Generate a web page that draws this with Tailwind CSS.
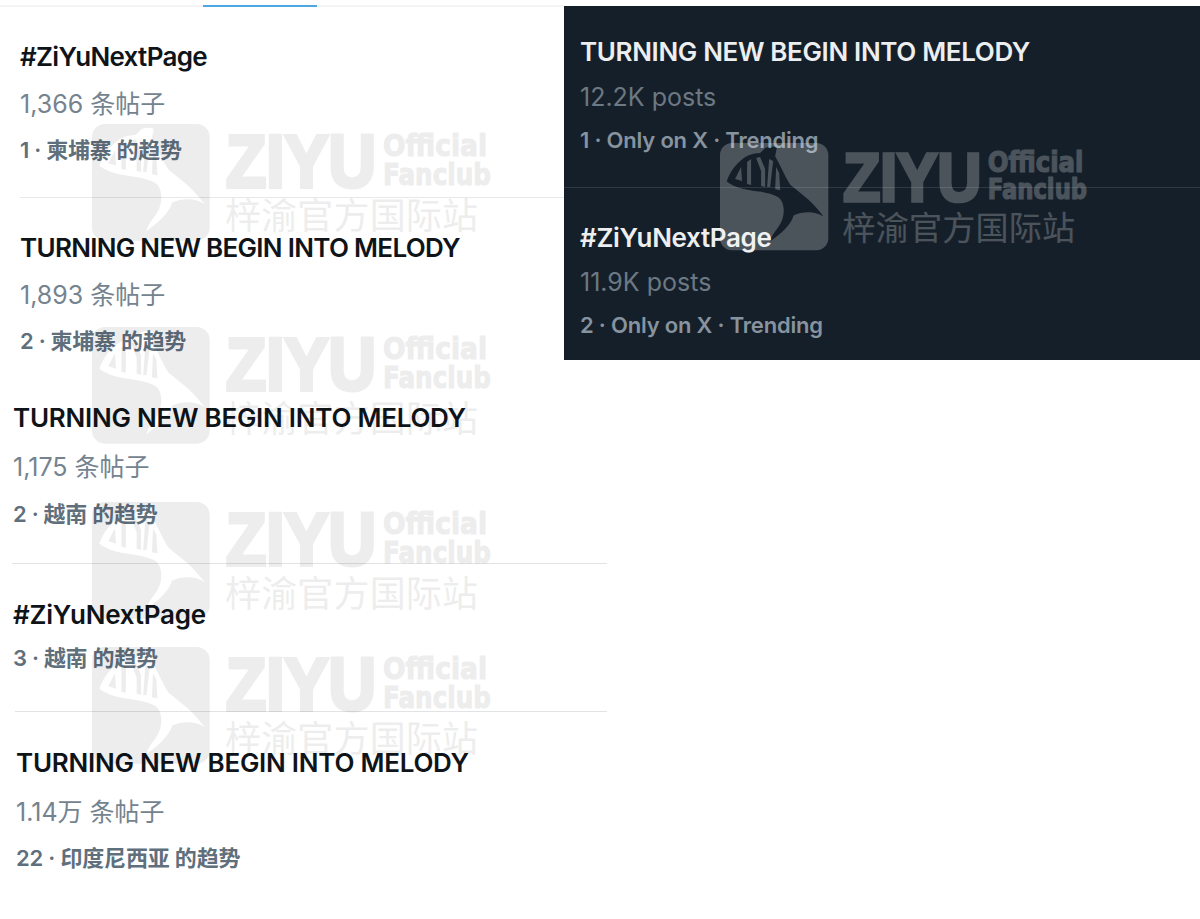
<!DOCTYPE html>
<html lang="zh-CN">
<head>
  <meta charset="UTF-8">
  <title>ZiYu trending</title>
  <script src="https://cdn.jsdelivr.net/npm/@tailwindcss/browser@4"></script>
</head>
<body class="bg-white">
  <div id="page" class="relative w-[1200px] h-[919px] overflow-hidden bg-white font-['Inter','Noto_Sans_CJK_SC',sans-serif]">

    <!-- Top row -->
    <div class="flex h-[366px]">
      <section class="w-[564px] shrink-0 pl-5">
        <div class="h-[5px]"></div>
        <div class="h-[2px] -ml-5 bg-[#f3f4f4]">
          <div class="ml-[203px] w-[114px] h-[2px] bg-[#4fa8e2]"></div>
        </div>
        <div class="h-[26px]"></div>
        <h2 class="h-[48px] leading-[48px] text-[26px] font-semibold tracking-[-0.7px] text-[#0f1419]">#ZiYuNextPage</h2>
        <p class="h-[46px] leading-[46px] text-[25px] text-[#75838f]">1,366 条帖子</p>
        <p class="h-[46px] leading-[46px] text-[22px] font-semibold tracking-[-0.3px] text-[#5f6f7c]">1 · 柬埔寨 的趋势</p>
        <div class="h-[24px]"></div>
        <div class="h-px bg-[#e6e9eb]"></div>
        <div class="h-[26px]"></div>
        <h2 class="h-[48px] leading-[48px] text-[26px] font-semibold tracking-[-0.7px] text-[#0f1419]">TURNING NEW BEGIN INTO MELODY</h2>
        <p class="h-[46px] leading-[47px] text-[25px] text-[#75838f]">1,893 条帖子</p>
        <p class="h-[46px] leading-[46px] text-[22px] font-semibold tracking-[-0.3px] text-[#5f6f7c]">2 · 柬埔寨 的趋势</p>
      </section>

      <section class="w-[636px] h-[354px] mt-[6px] pl-4 bg-[#151f2a]">
        <div class="h-[22px]"></div>
        <h2 class="h-[48px] leading-[48px] text-[26px] font-semibold tracking-[-0.35px] text-[#eceeef]">TURNING NEW BEGIN INTO MELODY</h2>
        <p class="h-[42px] leading-[42px] text-[25px] text-[#6c7882]">12.2K posts</p>
        <p class="h-[44px] leading-[44px] text-[22px] font-semibold tracking-[-0.2px] text-[#87939e]">1 · Only on X · Trending</p>
        <div class="h-[25px]"></div>
        <div class="h-px -ml-4 bg-[#2f3943]"></div>
        <div class="h-[26px]"></div>
        <h2 class="h-[47px] leading-[48px] text-[26px] font-semibold tracking-[-0.35px] text-[#eceeef]">#ZiYuNextPage</h2>
        <p class="h-[42px] leading-[42px] text-[25px] text-[#6c7882]">11.9K posts</p>
        <p class="h-[44px] leading-[44px] text-[22px] font-semibold tracking-[-0.2px] text-[#87939e]">2 · Only on X · Trending</p>
      </section>
    </div>

    <!-- Lower list -->
    <section class="w-[607px]">
      <div class="h-[28px]"></div>
      <div class="pl-[13px]">
        <h2 class="h-[49px] leading-[48px] text-[26px] font-semibold tracking-[-0.25px] text-[#0f1419]">TURNING NEW BEGIN INTO MELODY</h2>
        <p class="h-[48px] leading-[49px] text-[25px] text-[#75838f]">1,175 条帖子</p>
        <p class="h-[46px] leading-[46px] text-[22px] font-semibold tracking-[-0.3px] text-[#5f6f7c]">2 · 越南 的趋势</p>
      </div>
      <div class="h-[26px]"></div>
      <div class="h-px ml-3 bg-[#e0e4e6]"></div>
      <div class="pl-[13px] pt-[27px]">
        <h2 class="h-[44px] leading-[48px] text-[26px] font-semibold tracking-[-0.25px] text-[#0f1419]">#ZiYuNextPage</h2>
        <p class="h-[46px] leading-[46px] text-[22px] font-semibold tracking-[-0.3px] text-[#5f6f7c]">3 · 越南 的趋势</p>
      </div>
      <div class="h-[30px]"></div>
      <div class="h-px ml-[15px] bg-[#e0e4e6]"></div>
      <div class="pl-4 pt-[27px]">
        <h2 class="h-[48px] leading-[48px] text-[26px] font-semibold tracking-[-0.25px] text-[#0f1419]">TURNING NEW BEGIN INTO MELODY</h2>
        <p class="h-[48px] leading-[50px] text-[25px] text-[#75838f]">1.14万 条帖子</p>
        <p class="h-[46px] leading-[46px] text-[22px] font-semibold tracking-[-0.2px] text-[#5f6f7c]">22 · 印度尼西亚 的趋势</p>
      </div>
    </section>
  </div>

  <script>
    // watermark stamped over the screenshots: x, y, width, tint
    const marks = [
      { x: 92, y: 124, w: 400, tint: "text-black opacity-[0.065]" },
      { x: 92, y: 327, w: 400, tint: "text-black opacity-[0.065]" },
      { x: 92, y: 502, w: 400, tint: "text-black opacity-[0.065]" },
      { x: 92, y: 647, w: 400, tint: "text-black opacity-[0.065]" },
      { x: 720, y: 143, w: 368, tint: "text-white opacity-[0.23]" }
    ];

    const logo = "M12 0H96A12 12 0 0 1 108 12V95A12 12 0 0 1 96 107H12A12 12 0 0 1 0 95V12A12 12 0 0 1 12 0Z"
      + "M6.7 38.3C10 28 18 18 27 13C31 11 36 10 40 10L45 5C48 3 53 3 56.7 4.3L55 13.3C60 22 64 32 70 41.7C78 48 84 53 88.3 56.7C94 62 99 68 103.3 73.3C98 70 93 69 88.3 69C83 69 78 70 73.3 72.3C72 78 66 86 58.3 91.7L50 98.3C51 93 55 88 58 84C64 76 65 66 61.7 58.3C60 55 58 54 56.7 53.3C50 50 44 49 38.3 48.3C28 47 15 45 6.7 38.3Z"
      + "M15 36L21 24L22 38ZM27 19L31 16L31 42L27 41ZM36 15L40 14L45 26L45 44L41 43L41 28ZM49 16L53 18L50 44L47 44ZM56 24L59 30L60 47L55 46Z";

    document.getElementById("page").insertAdjacentHTML("beforeend", marks.map(m => `
      <svg viewBox="0 0 400 116" class="absolute overflow-visible pointer-events-none fill-current stroke-current ${m.tint}" style="left:${m.x}px;top:${m.y}px;width:${m.w}px">
        <path transform="scale(1.09)" stroke="none" fill-rule="evenodd" d="${logo}"/>
        <text x="134" y="63" textLength="150" lengthAdjust="spacingAndGlyphs" class="font-['Liberation_Sans'] font-bold text-[74px] stroke-[4px]">ZIYU</text>
        <text x="291" y="32" textLength="104" lengthAdjust="spacingAndGlyphs" class="font-['DejaVu_Sans'] font-bold text-[30px] stroke-[1.2px]">Official</text>
        <text x="291" y="61" textLength="108" lengthAdjust="spacingAndGlyphs" class="font-['DejaVu_Sans'] font-bold text-[30px] stroke-[1.2px]">Fanclub</text>
        <text x="133" y="105" textLength="253" class="font-['Noto_Sans_CJK_SC'] font-normal text-[36px] stroke-0">梓渝官方国际站</text>
      </svg>`).join(""));
  </script>
</body>
</html>
